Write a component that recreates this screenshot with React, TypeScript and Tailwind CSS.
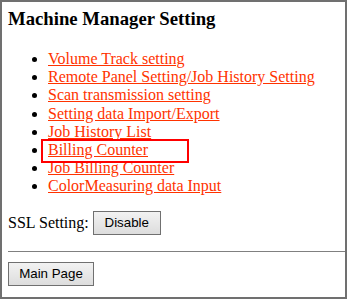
const links = [
  "Volume Track setting",
  "Remote Panel Setting/Job History Setting",
  "Scan transmission setting",
  "Setting data Import/Export",
  "Job History List",
  "Billing Counter",
  "Job Billing Counter",
  "ColorMeasuring data Input",
];

function PlainButton({ label, width }: { label: string; width: string }) {
  return (
    <button
      type="button"
      className={`${width} h-[24px] border border-[#707070] bg-gradient-to-b from-[#f2f2f2] to-[#dddddd] text-[13.33px] leading-none text-black font-['Liberation_Sans',Arial,sans-serif]`}
    >
      {label}
    </button>
  );
}

export default function App() {
  return (
    <div className="relative w-[347px] h-[299px] overflow-hidden border-2 border-[#707070] bg-white pl-[6px] pt-[6px] font-['Liberation_Serif','Times_New_Roman',serif] text-black">
      <h3 className="text-[18.72px] font-bold leading-[22px]">Machine Manager Setting</h3>

      <ul className="mt-[20px] list-disc pl-[40px] text-[16px] leading-[18.2px]">
        {links.map((label) => (
          <li key={label}>
            <a href="#" className="text-[#ff3300] underline decoration-[#ff3300]">
              {label}
            </a>
          </li>
        ))}
      </ul>

      <div className="mt-[15.4px] flex items-center text-[16px] leading-[18px]">
        <span className="mr-[4px]">SSL Setting:</span>
        <PlainButton label="Disable" width="w-[68px]" />
      </div>

      <hr className="mt-[16px] border-0 border-t border-[#808080]" />

      <div className="mt-[9px]">
        <PlainButton label="Main Page" width="w-[86px]" />
      </div>

      {/* highlight box drawn over the Billing Counter link */}
      <div className="absolute left-[39px] top-[137px] w-[148px] h-[24px] border-2 border-[#ff0000]" />
    </div>
  );
}
